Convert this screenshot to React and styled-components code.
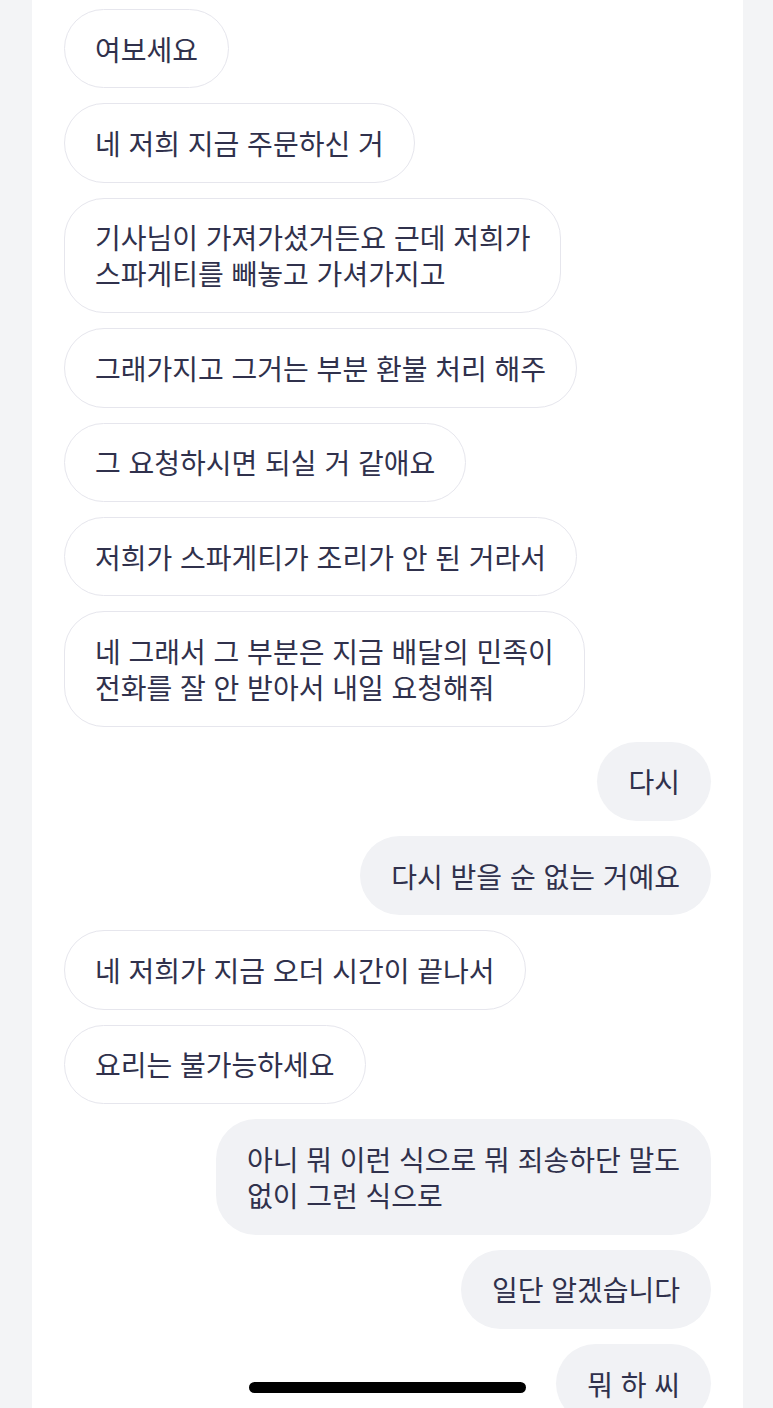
import React from "react";
import styled, { createGlobalStyle } from "styled-components";

const GlobalStyle = createGlobalStyle`
  html, body {
    margin: 0;
    padding: 0;
    height: 1408px;
    overflow: hidden;
    background: #f3f4f6;
  }
  * { box-sizing: border-box; }
`;

const Page = styled.div`
  width: 773px;
  height: 1408px;
  padding: 0 30px 0 32px;
  background: #f3f4f6;
`;

const Column = styled.main`
  height: 100%;
  background: #ffffff;
  padding: 9px 32px 0 32px;
  display: flex;
  flex-direction: column;
  gap: 15px;
  overflow: hidden;
`;

const Bubble = styled.div`
  align-self: ${(p) => (p.$mine ? "flex-end" : "flex-start")};
  flex-shrink: 0;
  font-family: "Noto Sans CJK KR", "Noto Sans", sans-serif;
  font-size: 28px;
  line-height: 36px;
  word-spacing: 1.5px;
  color: #30314c;
  white-space: nowrap;
  border-radius: 40px;
  background: ${(p) => (p.$mine ? "#f1f2f5" : "#ffffff")};
  border: ${(p) => (p.$mine ? "none" : "1px solid #e6e6ed")};
  padding: ${(p) => (p.$mine ? "21.7px 31px" : "20.7px 30px")};
`;

const HomeIndicator = styled.div`
  position: fixed;
  left: 249px;
  bottom: 15px;
  width: 277px;
  height: 11px;
  border-radius: 6px;
  background: #000;
`;

const messages = [
  { mine: false, lines: ["여보세요"] },
  { mine: false, lines: ["네 저희 지금 주문하신 거"] },
  { mine: false, lines: ["기사님이 가져가셨거든요 근데 저희가", "스파게티를 빼놓고 가셔가지고"] },
  { mine: false, lines: ["그래가지고 그거는 부분 환불 처리 해주"] },
  { mine: false, lines: ["그 요청하시면 되실 거 같애요"] },
  { mine: false, lines: ["저희가 스파게티가 조리가 안 된 거라서"] },
  { mine: false, lines: ["네 그래서 그 부분은 지금 배달의 민족이", "전화를 잘 안 받아서 내일 요청해줘"] },
  { mine: true, lines: ["다시"] },
  { mine: true, lines: ["다시 받을 순 없는 거예요"] },
  { mine: false, lines: ["네 저희가 지금 오더 시간이 끝나서"] },
  { mine: false, lines: ["요리는 불가능하세요"] },
  { mine: true, lines: ["아니 뭐 이런 식으로 뭐 죄송하단 말도", "없이 그런 식으로"] },
  { mine: true, lines: ["일단 알겠습니다"] },
  { mine: true, lines: ["뭐 하 씨"] },
];

export default function App() {
  return (
    <>
      <GlobalStyle />
      <Page>
        <Column>
          {messages.map((m, i) => (
            <Bubble key={i} $mine={m.mine}>
              {m.lines.map((l, j) => (
                <React.Fragment key={j}>
                  {j > 0 && <br />}
                  {l}
                </React.Fragment>
              ))}
            </Bubble>
          ))}
        </Column>
      </Page>
      <HomeIndicator />
    </>
  );
}
